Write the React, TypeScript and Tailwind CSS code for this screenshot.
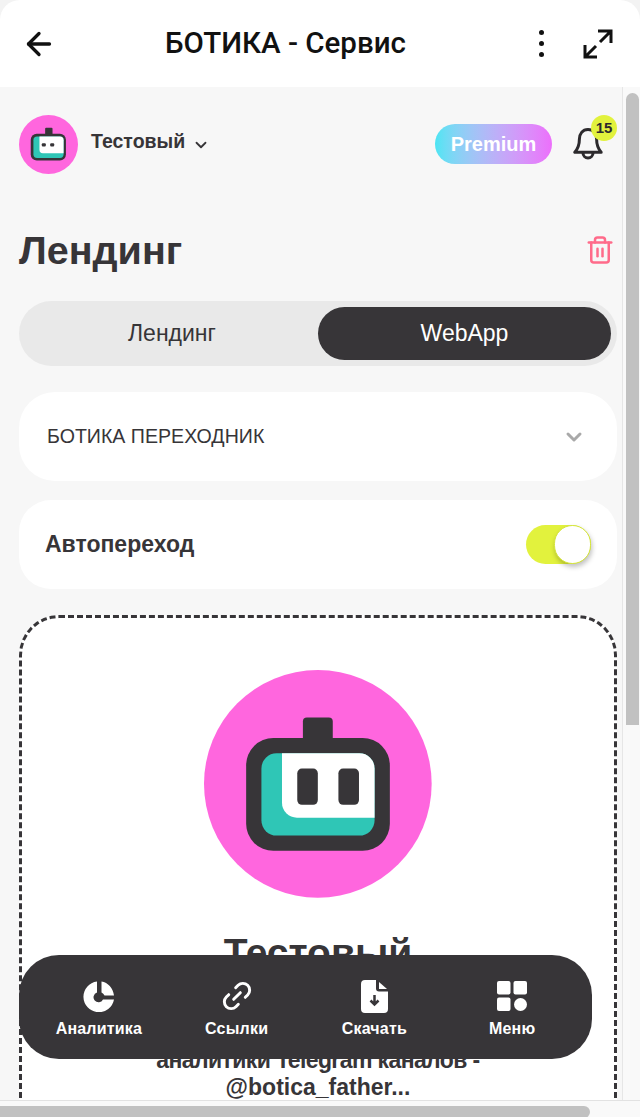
import React from "react";
import { ArrowLeft, ChevronDown, Trash2 } from "lucide-react";

const BotLogo = () => (
  <svg viewBox="70 60 687 687" className="block h-full w-full">
    <circle cx="413" cy="403" r="343" fill="#ff66de" />
    <rect x="368" y="203" width="90" height="90" rx="12" fill="#373538" />
    <rect x="197" y="265" width="433" height="340" rx="82" fill="#373538" />
    <rect x="243" y="311" width="341" height="248" rx="46" fill="#2fc6b6" />
    <path d="M305 311H538a46 46 0 0 1 46 46V505H350a45 45 0 0 1-45-45Z" fill="#fff" />
    <rect x="351" y="357" width="62" height="109" rx="14" fill="#373538" />
    <rect x="475" y="357" width="62" height="109" rx="14" fill="#373538" />
  </svg>
);

const SmallLogo = () => (
  <svg viewBox="57 44 176 176" className="block h-full w-full">
    <circle cx="145" cy="132" r="88" fill="#ff66de" />
    <rect x="135" y="82" width="22" height="24" rx="3" fill="#373538" />
    <rect x="92" y="100" width="105" height="80" rx="18" fill="#373538" />
    <rect x="100" y="108" width="90" height="64" rx="11" fill="#2fc6b6" />
    <path d="M118 108H179a11 11 0 0 1 11 11V158H128a10 10 0 0 1-10-10Z" fill="#fff" />
    <rect x="125" y="128" width="12" height="10" rx="3" fill="#373538" />
    <rect x="150" y="128" width="12" height="10" rx="3" fill="#373538" />
  </svg>
);

const ExpandIcon = () => (
  <svg width="30" height="30" viewBox="0 0 30 30" fill="none" stroke="#111" strokeWidth="3">
    <path d="M15 2H28V14M28 2 17 13" />
    <path d="M2 16V28H14M2 28 13 17" />
  </svg>
);

const BellIcon = () => (
  <svg width="30" height="33" viewBox="0 0 30 33" fill="none" stroke="#2c2a2d" strokeWidth="3" strokeLinejoin="round">
    <path d="M15 2.500c-5.500 0-8.600 4.400-8.600 9.600 0 5.600-1 9.200-4.600 13.200h26.400c-3.600-4-4.600-7.600-4.600-13.200 0-5.200-3.100-9.600-8.600-9.600Z" />
    <path d="M10 26a5 5 0 0 0 10 0" />
  </svg>
);

const PieIcon = () => (
  <svg width="32" height="32" viewBox="0 0 32 32" fill="#fff">
    <path d="M14 1.500A15.400 15.400 0 1 0 31 19.500H20A5 5 0 1 1 14 12.500Z" />
    <path d="M18.500 1.500C25 2.500 30 8 31 15.500H21.500A6.500 6.500 0 0 0 18.500 12.500Z" />
  </svg>
);

const LinkIcon = () => (
  <svg width="32" height="32" viewBox="0 0 24 24" fill="none" stroke="#fff" strokeWidth="2.200" strokeLinecap="round" strokeLinejoin="round">
    <path d="M9.500 14.500 14.500 9.500" />
    <path d="M11 5.800 12.800 4a5 5 0 0 1 7.200 7.200l-1.800 1.800" />
    <path d="M13 18.200 11.200 20A5 5 0 0 1 4 12.800L5.800 11" />
  </svg>
);

const FileIcon = () => (
  <svg width="27" height="33" viewBox="0 0 27 33">
    <path d="M4 0H15V8.500a3 3 0 0 0 3 3H27V29a4 4 0 0 1-4 4H4a4 4 0 0 1-4-4V4a4 4 0 0 1 4-4Z" fill="#fff" />
    <path d="M18 2 26 9H18Z" fill="#fff" />
    <path d="M13.500 15v9M9.500 20.500l4 4 4-4" fill="none" stroke="#373538" strokeWidth="2.500" />
  </svg>
);

const GridIcon = () => (
  <svg width="30" height="30" viewBox="0 0 30 30" fill="#fff">
    <rect x="0" y="0" width="13.500" height="13.500" rx="2" />
    <rect x="16.500" y="0" width="13.500" height="13.500" rx="2" />
    <rect x="0" y="16.500" width="13.500" height="13.500" rx="2" />
    <circle cx="23.500" cy="23.500" r="6.500" />
  </svg>
);

const navItems = [
  { label: "Аналитика", icon: <PieIcon /> },
  { label: "Ссылки", icon: <LinkIcon /> },
  { label: "Скачать", icon: <FileIcon /> },
  { label: "Меню", icon: <GridIcon /> },
];

export default function App() {
  return (
    <div className="relative flex h-[1117px] w-[640px] flex-col overflow-hidden bg-[#f3f3f3] font-['Liberation_Sans',Arial,sans-serif] text-[#373538]">
      <header className="flex h-[87px] shrink-0 items-center rounded-t-[20px] bg-white pl-[21px] pr-[27px] text-[#111]">
        <ArrowLeft size={36} strokeWidth={2.200} />
        <h1 className="ml-[108px] flex-1 font-['Roboto',sans-serif] text-[29.500px] font-medium">БОТИКА - Сервис</h1>
        <div className="mr-[39px] flex flex-col items-center gap-[6px]">
          <span className="h-[5px] w-[5px] rounded-full bg-[#111]" />
          <span className="h-[5px] w-[5px] rounded-full bg-[#111]" />
          <span className="h-[5px] w-[5px] rounded-full bg-[#111]" />
        </div>
        <ExpandIcon />
      </header>

      <div className="flex min-h-0 flex-1">
        <main className="min-w-0 flex-1 overflow-hidden bg-[#f7f7f7] pl-[19px] pr-[3px] pt-[28px]">
          <div className="flex h-[59px] items-start">
            <div className="h-[59px] w-[59px] shrink-0">
              <SmallLogo />
            </div>
            <span className="ml-[13px] mt-[14px] text-[19.500px] font-bold leading-[24px]">Тестовый</span>
            <ChevronDown size={18} strokeWidth={2.400} className="ml-[7px] mt-[21px]" />
            <div className="ml-auto mr-[66px] mt-[9px] flex h-[40px] w-[117px] items-center justify-center rounded-full bg-gradient-to-r from-[#4be5f3] to-[#ec6ffb] text-[20px] font-bold text-white">
              Premium
            </div>
            <div className="relative -ml-[45px] mr-[16px] mt-[12px]">
              <BellIcon />
              <span className="absolute -right-[14px] -top-[12px] flex h-[26px] w-[26px] items-center justify-center rounded-full bg-[#e2f23d] text-[15px] font-bold text-[#2c2a2d]">
                15
              </span>
            </div>
          </div>

          <div className="mt-[54px] flex h-[44px] w-[598px] items-center justify-between pr-[2px]">
            <h2 className="text-[39.500px] font-bold leading-[44px]">Лендинг</h2>
            <Trash2 size={30} strokeWidth={2} className="text-[#ff6b8a]" />
          </div>

          <div className="mt-[29px] flex h-[65px] w-[598px] items-center rounded-full bg-[#e9e9e9] pr-[6px]">
            <div className="flex-1 pl-[7px] text-center text-[23px] text-[#373538]">Лендинг</div>
            <div className="flex h-[53px] w-[293px] items-center justify-center rounded-full bg-[#373538] text-[23px] text-white">
              WebApp
            </div>
          </div>

          <div className="mt-[26px] flex h-[89px] w-[598px] items-center justify-between rounded-[36px] bg-white pl-[28px] pr-[31px]">
            <span className="text-[19.600px]">БОТИКА ПЕРЕХОДНИК</span>
            <ChevronDown size={24} strokeWidth={3} className="text-[#a9a9a9]" />
          </div>

          <div className="mt-[19px] flex h-[89px] w-[598px] items-center justify-between rounded-[32px] bg-white pl-[26px] pr-[26px]">
            <span className="text-[23px] font-bold">Автопереход</span>
            <div className="flex h-[39px] w-[65px] justify-end rounded-full bg-[#e2f23d]">
              <div className="h-[39px] w-[37px] rounded-full border-[1px] border-[#d5e53a] bg-white shadow-[1px_3px_5px_rgba(0,0,0,0.25)]" />
            </div>
          </div>

          <div className="mt-[26px] flex w-[598px] flex-col items-center rounded-[40px] border-[3px] border-dashed border-[#373538] bg-white pb-[120px] pt-[52px]">
            <div className="h-[228px] w-[228px]">
              <BotLogo />
            </div>
            <h3 className="mt-[32px] text-[39px] font-bold leading-[46px]">Тестовый</h3>
            <p className="mt-[71px] text-center text-[23px] font-bold leading-[27px]">
              <span className="tracking-[-0.6px]">аналитики Telegram каналов -</span>
              <br />
              @botica_father...
            </p>
          </div>
        </main>

        <aside className="flex w-[18px] shrink-0 justify-center border-l border-[#e6e6e6] bg-[#f9f9f9] pt-[6px]">
          <div className="ml-[1px] h-[632px] w-[13px] rounded-t-full bg-[#c1c1c1]" />
        </aside>
      </div>

      <div className="h-[17px] shrink-0 border-t border-[#e2e2e2] bg-[#f9f9f9] pt-[5px]">
        <div className="h-[12px] w-[590px] rounded-r-[6px] bg-[#c1c1c1]" />
      </div>

      <nav className="absolute left-[19px] top-[955px] grid h-[104px] w-[573px] grid-cols-4 rounded-[40px] bg-[#373538] px-[11px] text-white">
        {navItems.map((item) => (
          <div key={item.label} className="flex flex-col items-center">
            <div className="mt-[24px] flex h-[34px] items-center justify-center">{item.icon}</div>
            <span className="mt-[6px] text-[16px] font-bold leading-[20px] tracking-[0.2px]">{item.label}</span>
          </div>
        ))}
      </nav>
    </div>
  );
}
